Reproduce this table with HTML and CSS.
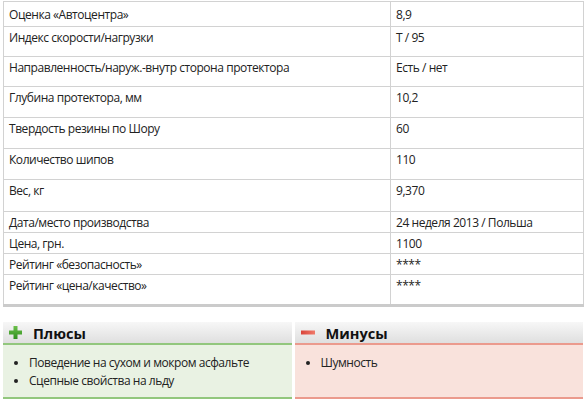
FILE: index.html
```html
<!DOCTYPE html>
<html lang="ru">
<head>
<meta charset="utf-8">
<link rel="stylesheet" href="styles.css">
</head>
<body>
<div class="page">
  <table class="specs">
    <colgroup><col class="kcol"><col class="vcol"></colgroup>
    <tr class="r-first"><td>Оценка «Автоцентра»</td><td>8,9</td></tr>
    <tr class="r-tall"><td>Индекс скорости/нагрузки</td><td>T / 95</td></tr>
    <tr class="r-tall"><td>Направленность/наруж.-внутр сторона протектора</td><td>Есть / нет</td></tr>
    <tr class="r-tall2"><td>Глубина протектора, мм</td><td>10,2</td></tr>
    <tr class="r-tall2"><td>Твердость резины по Шору</td><td>60</td></tr>
    <tr class="r-tall2"><td>Количество шипов</td><td>110</td></tr>
    <tr class="r-tall3"><td>Вес, кг</td><td>9,370</td></tr>
    <tr class="r-short"><td>Дата/место производства</td><td>24 неделя 2013 / Польша</td></tr>
    <tr class="r-short"><td>Цена, грн.</td><td>1100</td></tr>
    <tr class="r-short"><td>Рейтинг «безопасность»</td><td>****</td></tr>
    <tr class="r-last"><td>Рейтинг «цена/качество»</td><td>****</td></tr>
  </table>

  <div class="proscons">
    <div class="box pros">
      <div class="box-head">
        <svg class="icon" width="13" height="13" viewBox="0 0 13 13">
          <defs>
            <linearGradient id="gp" x1="0" y1="0" x2="0" y2="1">
              <stop offset="0" stop-color="#6cc04a"/>
              <stop offset="1" stop-color="#2f8f1f"/>
            </linearGradient>
          </defs>
          <path d="M4.5 0h4v4.5h4.5v4h-4.5v4.5h-4v-4.5h-4.5v-4h4.5z" fill="url(#gp)"/>
        </svg>
        <span class="title">Плюсы</span>
      </div>
      <ul class="box-body">
        <li>Поведение на сухом и мокром асфальте</li>
        <li>Сцепные свойства на льду</li>
      </ul>
    </div>
    <div class="box cons">
      <div class="box-head">
        <svg class="icon" width="14" height="13" viewBox="0 0 14 13">
          <defs>
            <linearGradient id="gm" x1="0" y1="0" x2="1" y2="0">
              <stop offset="0" stop-color="#d9443a"/>
              <stop offset="1" stop-color="#f07a6a"/>
            </linearGradient>
          </defs>
          <rect x="0" y="4.5" width="14" height="4" fill="url(#gm)"/>
        </svg>
        <span class="title">Минусы</span>
      </div>
      <ul class="box-body">
        <li>Шумность</li>
      </ul>
    </div>
  </div>
</div>
</body>
</html>
```

FILE: styles.css
```css
html, body {
  margin: 0;
  padding: 0;
  background: #fff;
}
body {
  font-family: "Open Sans", "Noto Sans", sans-serif;
  font-size: 12px;
  letter-spacing: -0.45px;
  color: #222;
}
.page {
  padding: 1px 4px 0 3px;
}
.specs {
  width: 580px;
  border-collapse: collapse;
  table-layout: fixed;
  border: 1px solid #d2d2d2;
  border-bottom: 3px solid #cbcbcb;
}
.kcol { width: 387px; }
.vcol { width: 193px; }
.specs td {
  border: 1px solid #d2d2d2;
  padding: 0 5px;
  vertical-align: top;
  line-height: 16px;
  box-sizing: border-box;
}
.r-first td { height: 25px; padding-top: 5px; }
.r-tall td { height: 30px; padding-top: 3px; }
.r-tall2 td { height: 31px; padding-top: 3px; }
.r-tall3 td { height: 32px; padding-top: 3px; }
.r-short td { height: 21px; padding-top: 3px; }
.r-last td { height: 31px; padding-top: 3px; }

.proscons {
  display: flex;
  gap: 3px;
  margin-top: 15px;
  width: 580px;
}
.box {
  flex: 1 1 0;
  display: flex;
  flex-direction: column;
}
.box-head {
  height: 21px;
  display: flex;
  align-items: center;
  padding-left: 6px;
  background: linear-gradient(#f7f7f7, #dfdfdf);
}
.icon {
  display: block;
  margin-right: 11px;
}
.title {
  font-size: 14.6px;
  font-weight: 700;
  letter-spacing: 0;
  color: #111;
}
.box-body {
  margin: 0;
  padding: 9px 0 0 26px;
  height: 56px;
  box-sizing: border-box;
  list-style: disc;
  line-height: 18px;
}
.pros .box-body {
  background: #e9f2e3;
  border-top: 2px solid #92c77d;
  border-bottom: 2px solid #92c77d;
}
.cons .box-body {
  background: #f9e2dc;
  border-top: 2px solid #eb9a8d;
  border-bottom: 2px solid #eb9a8d;
}
```
